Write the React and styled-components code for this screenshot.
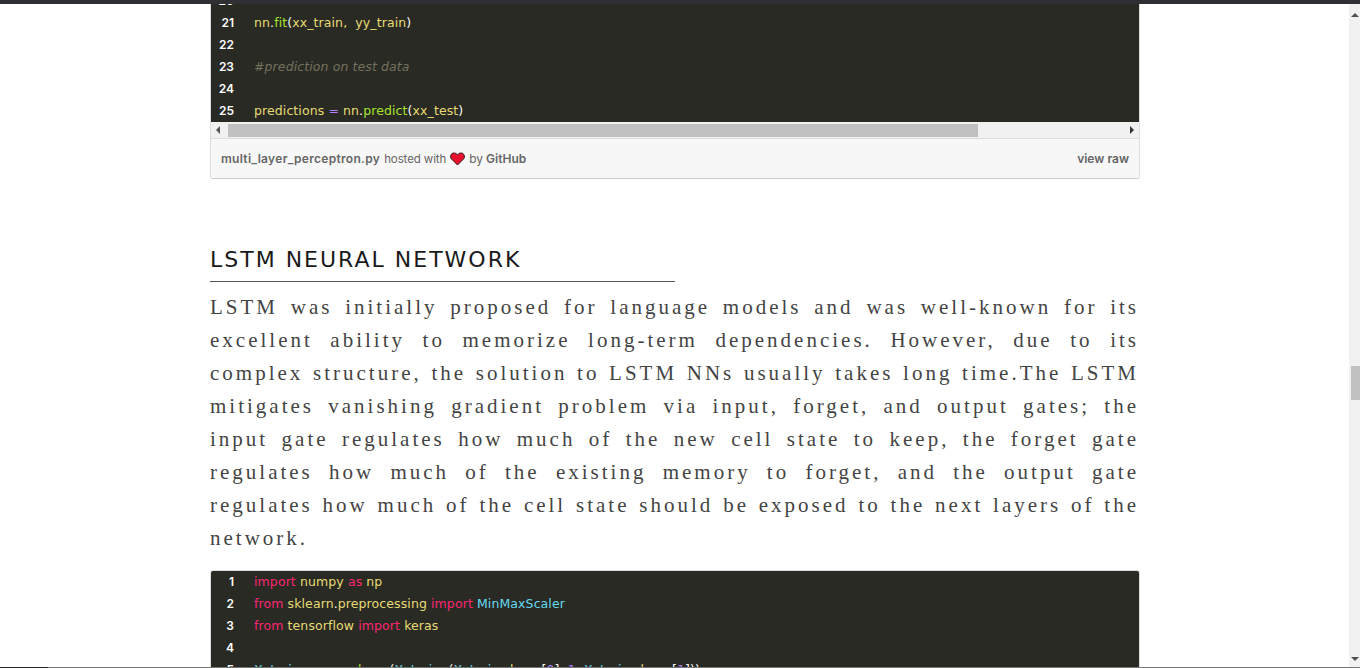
import React from "react";
import styled, { createGlobalStyle } from "styled-components";

const GlobalStyle = createGlobalStyle`
  html, body {
    margin: 0;
    height: 100%;
    overflow: hidden;
    background: #fff;
  }
  #root {
    height: 100%;
  }
`;

const Page = styled.div`
  height: 668px;
  display: flex;
  flex-direction: column;
  overflow: hidden;
`;

const TopBar = styled.div`
  flex: none;
  height: 4px;
  background: #2f3033;
`;

const Middle = styled.div`
  flex: 1;
  min-height: 0;
  display: flex;
`;

const Content = styled.main`
  flex: 1;
  min-width: 0;
  overflow: hidden;
  padding: 0 209px 0 210px;
`;

const Gist = styled.div`
  border: 1px solid #ddd;
  border-bottom-color: #ccc;
  border-radius: 3px;
  overflow: hidden;
  margin-top: ${({ $offset }) => $offset || 0}px;
`;

const Code = styled.div`
  background: #2a2a24;
  font-family: "DejaVu Sans", sans-serif;
  font-size: 12.5px;
  letter-spacing: 0.1px;
  line-height: 22px;
`;

const Row = styled.div`
  display: flex;
  height: 22px;
  white-space: pre;
`;

const LineNo = styled.span`
  flex: none;
  width: 23px;
  margin-right: 20px;
  text-align: right;
  color: #fff;
  font-family: "Inter", sans-serif;
  font-weight: 600;
  font-size: 12px;
  letter-spacing: 0;
`;

const Tok = styled.span`
  color: ${({ $c }) => $c || "#e6db74"};
  font-style: ${({ $i }) => ($i ? "italic" : "normal")};
`;

const HScroll = styled.div`
  height: 17px;
  background: #f1f1f1;
  display: flex;
  align-items: center;
  justify-content: space-between;
  padding: 0 5px;
  border-bottom: 1px solid #ddd;
  box-sizing: border-box;
  position: relative;
`;

const HThumb = styled.div`
  position: absolute;
  left: 17px;
  top: 2px;
  width: 750px;
  height: 13px;
  background: #c1c1c1;
`;

const Arrow = styled.i`
  width: 0;
  height: 0;
  display: block;
  border-style: solid;
  border-color: transparent;
  ${({ $dir, $col }) =>
    $dir === "left"
      ? `border-width: 4px 4px 4px 0; border-right-color: ${$col};`
      : $dir === "right"
      ? `border-width: 4px 0 4px 4px; border-left-color: ${$col};`
      : $dir === "up"
      ? `border-width: 0 4px 4px; border-bottom-color: ${$col};`
      : `border-width: 4px 4px 0; border-top-color: ${$col};`}
`;

const Meta = styled.div`
  height: 39px;
  background: #f7f7f7;
  display: flex;
  align-items: center;
  justify-content: space-between;
  padding: 0 10px;
  font-family: "Inter", "Open Sans", sans-serif;
  font-size: 12px;
  color: #666;
`;

const MetaLeft = styled.div`
  display: flex;
  align-items: center;
  gap: 3px;
`;

const MetaLink = styled.span`
  font-weight: 600;
  color: #666;
  letter-spacing: ${({ $ls }) => $ls || 0}px;
`;

const Hosted = styled.span`
  margin-left: 1px;
  font-size: 11.5px;
  letter-spacing: -0.1px;
`;

const Heading = styled.h2`
  margin: 65px 0 0;
  width: 465px;
  height: 38px;
  box-sizing: border-box;
  border-bottom: 1px solid #555;
  font-family: "DejaVu Sans", sans-serif;
  font-weight: 400;
  font-size: 22px;
  line-height: 32px;
  letter-spacing: 2px;
  color: #1a1a1a;
  white-space: nowrap;
`;

const Para = styled.p`
  margin: 9px 1px 15px 0;
  font-family: "Liberation Serif", serif;
  font-size: 21px;
  line-height: 33px;
  letter-spacing: 3px;
  text-align: justify;
  color: #444;
`;

const VScroll = styled.div`
  flex: none;
  width: 11px;
  background: #f1f1f1;
  position: relative;
  display: flex;
  flex-direction: column;
  align-items: flex-end;
  justify-content: space-between;
  padding: 9px 1px 6px 0;
  box-sizing: border-box;
`;

const VThumb = styled.div`
  position: absolute;
  right: 0;
  top: 362px;
  width: 9px;
  height: 34px;
  background: #c1c1c1;
`;

const BottomBar = styled.div`
  flex: none;
  height: 1px;
  background: linear-gradient(to right, #222 48px, #777 48px);
`;

const PINK = "#f92672";
const GREEN = "#a6e22e";
const WHITE = "#f8f8f2";
const PURPLE = "#ae81ff";
const BLUE = "#66d9ef";
const GREY = "#75715e";

const firstBlock = [
  [20, []],
  [21, [["nn"], [".", WHITE], ["fit", GREEN], ["(", WHITE], ["xx_train,  yy_train"], [")", WHITE]]],
  [22, []],
  [23, [["#prediction on test data", GREY, true]]],
  [24, []],
  [25, [["predictions "], ["=", PURPLE], [" nn"], [".", WHITE], ["predict", GREEN], ["(", WHITE], ["xx_test"], [")", WHITE]]],
];

const secondBlock = [
  [1, [["import", PINK], [" numpy "], ["as", PINK], [" np"]]],
  [2, [["from", PINK], [" sklearn"], [".", WHITE], ["preprocessing "], ["import", PINK], [" "], ["MinMaxScaler", BLUE]]],
  [3, [["from", PINK], [" tensorflow "], ["import", PINK], [" keras"]]],
  [4, []],
  [5, [
    ["Xxtrain", BLUE], [" = np"], [".", WHITE], ["reshape", GREEN], ["(", WHITE],
    ["Xxtrain", BLUE], [", (", WHITE], ["Xxtrain", BLUE], [".", WHITE], ["shape"], ["[", WHITE],
    ["0", PURPLE], ["], ", WHITE], ["1", PURPLE], [", ", WHITE], ["Xxtrain", BLUE], [".", WHITE],
    ["shape"], ["[", WHITE], ["1", PURPLE], ["]))", WHITE],
  ]],
];

function CodeRows({ rows }) {
  return rows.map(([n, toks]) => (
    <Row key={n}>
      <LineNo>{n}</LineNo>
      {toks.map(([t, c, i], k) => (
        <Tok key={k} $c={c} $i={i}>
          {t}
        </Tok>
      ))}
    </Row>
  ));
}

function Heart() {
  return (
    <svg width="15" height="14" viewBox="0 0 15 14" style={{ margin: "0 1px" }}>
      <path
        d="M7.5 13 L1.5 7 C-0.5 4.5 1 1 4 1 C5.7 1 6.8 2 7.5 3 C8.2 2 9.3 1 11 1 C14 1 15.5 4.5 13.5 7 Z"
        fill="#e8112d"
        stroke="#3a1a1a"
        strokeWidth="1"
      />
    </svg>
  );
}

export default function App() {
  return (
    <Page>
      <GlobalStyle />
      <TopBar />
      <Middle>
        <Content>
          <Gist $offset={-15}>
            <Code>
              <CodeRows rows={firstBlock} />
            </Code>
            <HScroll>
              <Arrow $dir="left" $col="#555" />
              <HThumb />
              <Arrow $dir="right" $col="#333" />
            </HScroll>
            <Meta>
              <MetaLeft>
                <MetaLink $ls={0.3}>multi_layer_perceptron.py</MetaLink>
                <Hosted>hosted with</Hosted>
                <Heart />
                <span>by</span>
                <MetaLink>GitHub</MetaLink>
              </MetaLeft>
              <MetaLink>view raw</MetaLink>
            </Meta>
          </Gist>
          <Heading>LSTM NEURAL NETWORK</Heading>
          <Para>
            LSTM was initially proposed for language models and was well-known for its excellent ability to memorize
            long-term dependencies. However, due to its complex structure, the solution to LSTM NNs usually takes long
            time.The LSTM mitigates vanishing gradient problem via input, forget, and output gates; the input gate
            regulates how much of the new cell state to keep, the forget gate regulates how much of the existing memory
            to forget, and the output gate regulates how much of the cell state should be exposed to the next layers of
            the network.
          </Para>
          <Gist>
            <Code>
              <CodeRows rows={secondBlock} />
            </Code>
          </Gist>
        </Content>
        <VScroll>
          <Arrow $dir="up" $col="#505050" />
          <VThumb />
          <Arrow $dir="down" $col="#505050" />
        </VScroll>
      </Middle>
      <BottomBar />
    </Page>
  );
}
